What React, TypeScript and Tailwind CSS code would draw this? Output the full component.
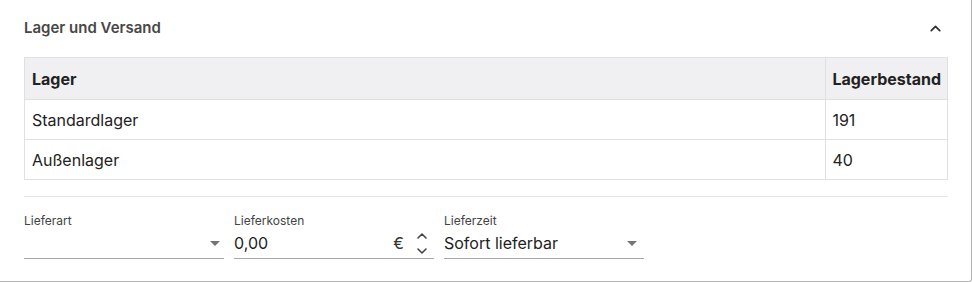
import { ChevronUp, ChevronDown } from "lucide-react";

const rows = [
  { name: "Standardlager", stock: 191 },
  { name: "Außenlager", stock: 40 },
];

const Caret = () => (
  <svg width="10" height="5" viewBox="0 0 10 5" className="shrink-0">
    <path d="M0 0h10L5 5z" fill="#757575" />
  </svg>
);

const App = () => {
  return (
    <div
      className="w-[972px] h-[282px] bg-white border-b border-r border-[#b5b5b5] rounded-br-[3px] overflow-hidden"
      style={{ fontFamily: "Inter, 'Noto Sans', sans-serif" }}
    >
      <div className="pl-6 pr-[23px]">
        <div className="flex items-center justify-between h-[57px] pb-[1px]">
          <h2 className="text-[15px] font-semibold text-[#474747]">Lager und Versand</h2>
          <ChevronUp size={17} strokeWidth={2.5} className="text-[#333] mr-[4px]" />
        </div>

        <table className="w-full border-collapse text-base text-[#222]">
          <thead>
            <tr className="bg-[#f0f0f2] h-[42px]">
              <th className="border border-[#e0e0e0] text-left font-bold px-[7px]">Lager</th>
              <th className="border border-[#e0e0e0] text-left font-bold px-[6px] w-[120px]">
                Lagerbestand
              </th>
            </tr>
          </thead>
          <tbody>
            {rows.map((r) => (
              <tr key={r.name} className="h-[40px]">
                <td className="border border-[#e0e0e0] px-[7px]">{r.name}</td>
                <td className="border border-[#e0e0e0] px-[6px]">{r.stock}</td>
              </tr>
            ))}
          </tbody>
        </table>

        <div className="mt-[16px] border-t border-[#e6e6e6]" />

        <div className="flex gap-[10px] mt-[17px]">
          <div className="w-[200px]">
            <div className="text-xs leading-[14px] text-[#444]">Lieferart</div>
            <div className="flex items-center justify-end h-[31px] border-b border-[#a8a8a8] pr-[4px]">
              <Caret />
            </div>
          </div>

          <div className="w-[200px]">
            <div className="text-xs leading-[14px] text-[#444]">Lieferkosten</div>
            <div className="flex items-center h-[31px] border-b border-[#a8a8a8]">
              <span className="flex-1 text-base text-[#222]">0,00</span>
              <span className="text-base text-[#333] mr-[10px]">€</span>
              <div className="flex flex-col -space-y-[1px] text-[#444] mr-[4px]">
                <ChevronUp size={16} strokeWidth={2.4} />
                <ChevronDown size={16} strokeWidth={2.4} />
              </div>
            </div>
          </div>

          <div className="w-[200px]">
            <div className="text-xs leading-[14px] text-[#444]">Lieferzeit</div>
            <div className="flex items-center justify-between h-[31px] border-b border-[#a8a8a8] pr-[7px]">
              <span className="text-base text-[#222]">Sofort lieferbar</span>
              <Caret />
            </div>
          </div>
        </div>
      </div>
    </div>
  );
};

export default App;
